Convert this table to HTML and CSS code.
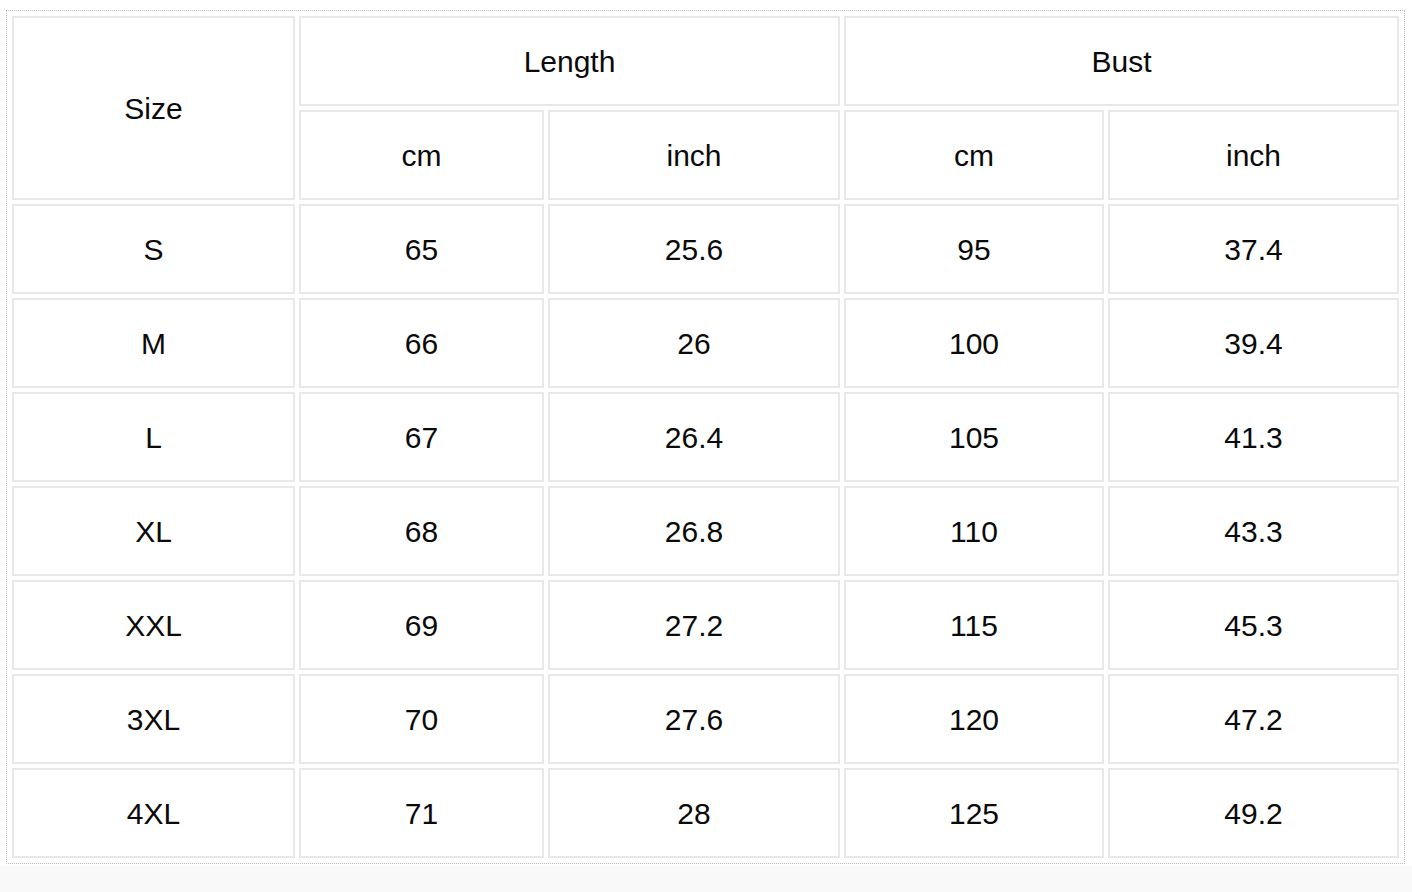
FILE: index.html
```html
<!DOCTYPE html>
<html>
<head>
<meta charset="utf-8">
<link rel="stylesheet" href="styles.css">
</head>
<body>
<div class="page">
  <div class="frame">
    <table class="size-table">
      <colgroup>
        <col class="c-size"><col class="c-lcm"><col class="c-linch"><col class="c-bcm"><col class="c-binch">
      </colgroup>
      <thead>
        <tr><th rowspan="2">Size</th><th colspan="2">Length</th><th colspan="2">Bust</th></tr>
        <tr><th>cm</th><th>inch</th><th>cm</th><th>inch</th></tr>
      </thead>
      <tbody>
        <tr><td>S</td><td>65</td><td>25.6</td><td>95</td><td>37.4</td></tr>
        <tr><td>M</td><td>66</td><td>26</td><td>100</td><td>39.4</td></tr>
        <tr><td>L</td><td>67</td><td>26.4</td><td>105</td><td>41.3</td></tr>
        <tr><td>XL</td><td>68</td><td>26.8</td><td>110</td><td>43.3</td></tr>
        <tr><td>XXL</td><td>69</td><td>27.2</td><td>115</td><td>45.3</td></tr>
        <tr><td>3XL</td><td>70</td><td>27.6</td><td>120</td><td>47.2</td></tr>
        <tr><td>4XL</td><td>71</td><td>28</td><td>125</td><td>49.2</td></tr>
      </tbody>
    </table>
  </div>
</div>
</body>
</html>
```
FILE: styles.css
```css
html, body {
  margin: 0;
  padding: 0;
  background: #f9f9f9;
}
body {
  font-family: "Liberation Sans", Arial, sans-serif;
  color: #0a0a0a;
}
.page {
  background: #fff;
  height: 866px;
  padding: 10px 0 0 6px;
  box-sizing: border-box;
}
.frame {
  display: inline-block;
  border: 1px dotted #bdbdbd;
  padding: 1px;
}
.size-table {
  border-collapse: separate;
  border-spacing: 4px;
  table-layout: fixed;
  width: 1395px;
}
.c-size { width: 283px; }
.c-lcm { width: 245px; }
.c-linch { width: 292px; }
.c-bcm { width: 260px; }
.c-binch { width: 291px; }
.size-table th,
.size-table td {
  border: 2px solid #e8e8e8;
  height: 90px;
  box-sizing: border-box;
  padding: 2px 0 0;
  text-align: center;
  vertical-align: middle;
  font-size: 30px;
  font-weight: normal;
  line-height: 1;
}
```
